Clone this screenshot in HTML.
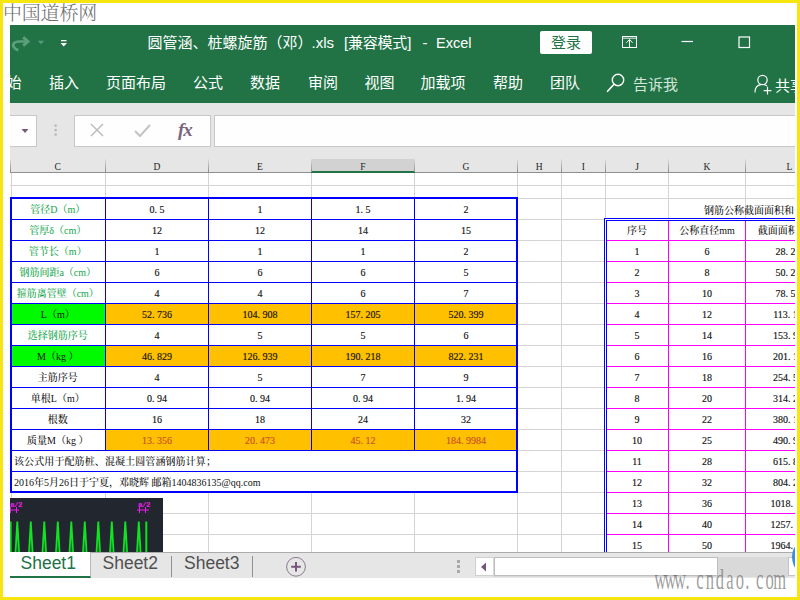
<!DOCTYPE html>
<html lang="zh-CN">
<head>
<meta charset="utf-8">
<title>圆管涵、桩螺旋筋（邓）.xls [兼容模式] - Excel</title>
<style>
html,body{margin:0;padding:0;}
body{width:800px;height:600px;position:relative;overflow:hidden;background:#fff;
 font-family:"Liberation Sans","Noto Sans CJK SC",sans-serif;}
#frame{position:absolute;left:0;top:0;width:794px;height:594px;border:3px solid #f6e50e;background:#fff;}
#app{position:absolute;left:10px;top:25px;width:785px;height:553px;overflow:hidden;background:#fff;}
.abs{position:absolute;}
#green{left:0;top:0;width:785px;height:78px;background:#217346;}
.tt{position:absolute;color:#fff;white-space:nowrap;}
.tab{position:absolute;top:47px;color:#fff;font-size:15px;line-height:22px;white-space:nowrap;}
#fbar{left:0;top:78px;width:785px;height:56px;background:#e6e6e6;}
.fbox{position:absolute;top:12px;height:32px;background:#fefefe;border:1px solid #c8c8c8;box-sizing:border-box;}
#hdr{left:0;top:134px;width:785px;height:13px;background:#e6e6e6;border-bottom:1px solid #8e8e8e;}
.ch{position:absolute;top:1.5px;height:13px;font:9.5px/13px "Liberation Serif","Noto Serif CJK SC",serif;color:#222;text-align:center;}
.vs{position:absolute;top:0;width:1px;height:13px;background:linear-gradient(#dcdcdc,#8c8c8c);}
#grid{left:0;top:148px;width:785px;height:379px;background:#fff;}
.gl{position:absolute;background:#d4d4d4;}
.cell{position:absolute;box-sizing:border-box;font:10px/21px "Liberation Serif","Noto Serif CJK SC",serif;color:#111;text-align:center;white-space:nowrap;overflow:hidden;letter-spacing:0;font-weight:500;}
.n{-webkit-text-stroke:0.15px currentColor;}
.p{display:inline-block;width:5px;text-align:left;}
.bl{position:absolute;background:#0000ff;}
.mg{position:absolute;background:#ff00ff;}
#tabs{left:0;top:527px;width:785px;height:26px;background:#e6e6e6;}
.st{position:absolute;top:-1.5px;font-size:17.5px;line-height:24px;color:#505050;white-space:nowrap;}
</style>
</head>
<body>
<div id="frame"></div>
<div class="abs" style="left:3px;top:1px;font:300 19px/26px 'Liberation Serif','Noto Serif CJK SC',serif;color:#6e6e6e;letter-spacing:-0.2px;white-space:nowrap;">中国道桥网</div>
<div id="app">

<div id="green" class="abs">
<svg class="abs" style="left:0;top:0" width="80" height="40" viewBox="0 0 80 40">
<path d="M8.3 25.2 C3.6 23.6 2 20.2 4.2 18 C5.6 16.7 7 16.5 9.5 16.5 L17.5 16.5" fill="none" stroke="#5c9f7c" stroke-width="2.7" stroke-linecap="butt"/>
<path d="M13.2 12.3 L18 16.5 L13.2 20.7" fill="none" stroke="#5c9f7c" stroke-width="2.9" stroke-linecap="butt" stroke-linejoin="miter"/>
<path d="M27.7 15.8 L34.2 15.8 L31 19.2 Z" fill="#55997a"/>
<rect x="51" y="15" width="5.5" height="1.3" fill="#fff"/>
<path d="M50.5 18 L57 18 L53.75 21.5 Z" fill="#fff"/>
</svg>
<div class="tt" style="left:137.6px;top:6.5px;font-size:15px;line-height:22px;">圆管涵、桩螺旋筋（邓）</div>
<div class="tt" style="left:301.5px;top:6.5px;font-size:15px;line-height:22px;">.xls</div>
<div class="tt" style="left:334px;top:6.5px;font-size:15px;line-height:22px;letter-spacing:-0.2px;">[兼容模式]</div>
<div class="tt" style="left:412.5px;top:6.5px;font-size:15px;line-height:22px;">-</div>
<div class="tt" style="left:426px;top:6.5px;font-size:14.5px;line-height:22px;">Excel</div>
<div class="abs" style="left:530px;top:6px;width:52px;height:23px;border-radius:2px;background:#fff;color:#217346;font-size:15px;line-height:24px;text-align:center;">登录</div>
<svg class="abs" style="left:605px;top:5px" width="150" height="24" viewBox="0 0 150 24">
<rect x="7.5" y="6.5" width="14" height="11" fill="none" stroke="#fff" stroke-width="1"/>
<path d="M7.5 8.2 H21.5" stroke="#fff" stroke-width="0.9" fill="none"/>
<path d="M14.5 17 V9.6 M11.4 12.8 L14.5 9.5 L17.6 12.8" stroke="#fff" stroke-width="1" fill="none"/>
<path d="M66.5 11.5 H78" stroke="#fff" stroke-width="1.2" fill="none"/>
<rect x="124" y="7" width="10.5" height="10.5" fill="none" stroke="#fff" stroke-width="1.2"/>
</svg>
<div class="tab" style="left:-3.5px;">始</div>
<div class="tab" style="left:39px;">插入</div>
<div class="tab" style="left:96px;">页面布局</div>
<div class="tab" style="left:183px;">公式</div>
<div class="tab" style="left:240px;">数据</div>
<div class="tab" style="left:298px;">审阅</div>
<div class="tab" style="left:354.5px;">视图</div>
<div class="tab" style="left:410.5px;">加载项</div>
<div class="tab" style="left:483px;">帮助</div>
<div class="tab" style="left:540px;">团队</div>
<div class="tab" style="left:623px;color:#d5e6dc;top:49px;">告诉我</div>
<div class="tab" style="left:765px;top:49.5px;">共享</div>
<svg class="abs" style="left:594px;top:44px" width="180" height="28" viewBox="0 0 180 28">
<circle cx="14" cy="11" r="5.7" fill="none" stroke="#fff" stroke-width="1.4"/>
<path d="M10 15.2 L3.6 22.3" stroke="#fff" stroke-width="1.6" fill="none" stroke-linecap="round"/>
<circle cx="158.5" cy="11" r="4.7" fill="none" stroke="#fff" stroke-width="1.2"/>
<path d="M151 23.5 C151 18 154 16 157 15.7 M160 15.7 C161 15.8 162 16.2 163 17" stroke="#fff" stroke-width="1.2" fill="none"/>
<path d="M163.5 17.8 V25.6 M159.6 21.7 H167.4" stroke="#fff" stroke-width="1.2" fill="none"/>
</svg>
</div>
<div id="fbar" class="abs">
<div class="fbox" style="left:-5px;width:32px;"></div>
<div class="fbox" style="left:64px;width:137px;"></div>
<div class="fbox" style="left:204px;width:600px;"></div>
<svg class="abs" style="left:0;top:12px" width="205" height="30" viewBox="0 0 205 30">
<path d="M11.5 14 L18.5 14 L15 18 Z" fill="#75577a"/>
<rect x="44.5" y="9.5" width="2.2" height="2.2" fill="#b5b5b5"/><rect x="44.5" y="14" width="2.2" height="2.2" fill="#b5b5b5"/><rect x="44.5" y="18.5" width="2.2" height="2.2" fill="#b5b5b5"/>
<path d="M81 9 L93 21 M93 9 L81 21" stroke="#bdbdbd" stroke-width="1.5" fill="none"/>
<path d="M125 16 L130 21 L140 10" stroke="#c4c4c4" stroke-width="2" fill="none"/>
<text x="168" y="21" font-family="Liberation Serif, serif" font-style="italic" font-size="19" fill="#7b6680" font-weight="bold" letter-spacing="-1">fx</text>
</svg>
</div>
<div id="hdr" class="abs">
<div class="abs" style="left:301.0px;top:0;width:103.5px;height:12px;background:#d2d2d2;border-bottom:2px solid #217346;"></div>
<div class="ch" style="left:0px;width:95.5px;">C</div>
<div class="ch" style="left:95.5px;width:103.0px;">D</div>
<div class="vs" style="left:95.0px;"></div>
<div class="ch" style="left:198.5px;width:103.0px;">E</div>
<div class="vs" style="left:198.0px;"></div>
<div class="ch" style="left:301.5px;width:103.0px;">F</div>
<div class="vs" style="left:301.0px;"></div>
<div class="ch" style="left:404.5px;width:103.0px;">G</div>
<div class="vs" style="left:404.0px;"></div>
<div class="ch" style="left:507.5px;width:43.5px;">H</div>
<div class="vs" style="left:507.0px;"></div>
<div class="ch" style="left:551px;width:44.5px;">I</div>
<div class="vs" style="left:550.5px;"></div>
<div class="ch" style="left:595.5px;width:63.0px;">J</div>
<div class="vs" style="left:595.0px;"></div>
<div class="ch" style="left:658.5px;width:77.0px;">K</div>
<div class="vs" style="left:658.0px;"></div>
<div class="ch" style="left:773.5px;width:12px;">L</div>
<div class="vs" style="left:735.0px;"></div>
<div class="vs" style="left:0px;"></div>
</div>
<div id="grid" class="abs">
<div class="gl" style="left:95.0px;top:0;width:1px;height:379px;"></div>
<div class="gl" style="left:198.0px;top:0;width:1px;height:379px;"></div>
<div class="gl" style="left:301.0px;top:0;width:1px;height:379px;"></div>
<div class="gl" style="left:404.0px;top:0;width:1px;height:379px;"></div>
<div class="gl" style="left:507.0px;top:0;width:1px;height:379px;"></div>
<div class="gl" style="left:550.5px;top:0;width:1px;height:379px;"></div>
<div class="gl" style="left:595.0px;top:0;width:1px;height:379px;"></div>
<div class="gl" style="left:658.0px;top:0;width:1px;height:379px;"></div>
<div class="gl" style="left:735.0px;top:0;width:1px;height:379px;"></div>
<div class="gl" style="left:1px;top:0;width:1px;height:379px;"></div>
<div class="gl" style="left:0;top:12.0px;width:785px;height:1px;"></div>
<div class="gl" style="left:0;top:25.0px;width:785px;height:1px;"></div>
<div class="gl" style="left:0;top:46.0px;width:785px;height:1px;"></div>
<div class="gl" style="left:0;top:67.0px;width:785px;height:1px;"></div>
<div class="gl" style="left:0;top:88.0px;width:785px;height:1px;"></div>
<div class="gl" style="left:0;top:109.0px;width:785px;height:1px;"></div>
<div class="gl" style="left:0;top:130.0px;width:785px;height:1px;"></div>
<div class="gl" style="left:0;top:151.0px;width:785px;height:1px;"></div>
<div class="gl" style="left:0;top:172.0px;width:785px;height:1px;"></div>
<div class="gl" style="left:0;top:193.0px;width:785px;height:1px;"></div>
<div class="gl" style="left:0;top:214.0px;width:785px;height:1px;"></div>
<div class="gl" style="left:0;top:235.0px;width:785px;height:1px;"></div>
<div class="gl" style="left:0;top:256.0px;width:785px;height:1px;"></div>
<div class="gl" style="left:0;top:277.0px;width:785px;height:1px;"></div>
<div class="gl" style="left:0;top:298.0px;width:785px;height:1px;"></div>
<div class="gl" style="left:0;top:319.0px;width:785px;height:1px;"></div>
<div class="gl" style="left:0;top:340.0px;width:785px;height:1px;"></div>
<div class="gl" style="left:0;top:361.0px;width:785px;height:1px;"></div>
<div class="gl" style="left:0;top:382.0px;width:785px;height:1px;"></div>
<div class="cell" style="left:0px;top:25.5px;width:95.5px;height:21.0px;color:#12a64a;">管径D（m）</div>
<div class="cell n" style="left:95.5px;top:25.5px;width:103.0px;height:21.0px;">0<span class="p">.</span>5</div>
<div class="cell n" style="left:198.5px;top:25.5px;width:103.0px;height:21.0px;">1</div>
<div class="cell n" style="left:301.5px;top:25.5px;width:103.0px;height:21.0px;">1<span class="p">.</span>5</div>
<div class="cell n" style="left:404.5px;top:25.5px;width:103.0px;height:21.0px;">2</div>
<div class="cell" style="left:0px;top:46.5px;width:95.5px;height:21.0px;color:#12a64a;">管厚δ（cm）</div>
<div class="cell n" style="left:95.5px;top:46.5px;width:103.0px;height:21.0px;">12</div>
<div class="cell n" style="left:198.5px;top:46.5px;width:103.0px;height:21.0px;">12</div>
<div class="cell n" style="left:301.5px;top:46.5px;width:103.0px;height:21.0px;">14</div>
<div class="cell n" style="left:404.5px;top:46.5px;width:103.0px;height:21.0px;">15</div>
<div class="cell" style="left:0px;top:67.5px;width:95.5px;height:21.0px;color:#12a64a;">管节长（m）</div>
<div class="cell n" style="left:95.5px;top:67.5px;width:103.0px;height:21.0px;">1</div>
<div class="cell n" style="left:198.5px;top:67.5px;width:103.0px;height:21.0px;">1</div>
<div class="cell n" style="left:301.5px;top:67.5px;width:103.0px;height:21.0px;">1</div>
<div class="cell n" style="left:404.5px;top:67.5px;width:103.0px;height:21.0px;">2</div>
<div class="cell" style="left:0px;top:88.5px;width:95.5px;height:21.0px;color:#12a64a;">钢筋间距a（cm）</div>
<div class="cell n" style="left:95.5px;top:88.5px;width:103.0px;height:21.0px;">6</div>
<div class="cell n" style="left:198.5px;top:88.5px;width:103.0px;height:21.0px;">6</div>
<div class="cell n" style="left:301.5px;top:88.5px;width:103.0px;height:21.0px;">6</div>
<div class="cell n" style="left:404.5px;top:88.5px;width:103.0px;height:21.0px;">5</div>
<div class="cell" style="left:0px;top:109.5px;width:95.5px;height:21.0px;color:#12a64a;">箍筋离管壁（cm）</div>
<div class="cell n" style="left:95.5px;top:109.5px;width:103.0px;height:21.0px;">4</div>
<div class="cell n" style="left:198.5px;top:109.5px;width:103.0px;height:21.0px;">4</div>
<div class="cell n" style="left:301.5px;top:109.5px;width:103.0px;height:21.0px;">6</div>
<div class="cell n" style="left:404.5px;top:109.5px;width:103.0px;height:21.0px;">7</div>
<div class="cell" style="left:0px;top:130.5px;width:95.5px;height:21.0px;background:#00fb00;color:#111;">L（m）</div>
<div class="cell n" style="left:95.5px;top:130.5px;width:103.0px;height:21.0px;background:#ffc000;">52<span class="p">.</span>736</div>
<div class="cell n" style="left:198.5px;top:130.5px;width:103.0px;height:21.0px;background:#ffc000;">104<span class="p">.</span>908</div>
<div class="cell n" style="left:301.5px;top:130.5px;width:103.0px;height:21.0px;background:#ffc000;">157<span class="p">.</span>205</div>
<div class="cell n" style="left:404.5px;top:130.5px;width:103.0px;height:21.0px;background:#ffc000;">520<span class="p">.</span>399</div>
<div class="cell" style="left:0px;top:151.5px;width:95.5px;height:21.0px;color:#12a64a;">选择钢筋序号</div>
<div class="cell n" style="left:95.5px;top:151.5px;width:103.0px;height:21.0px;">4</div>
<div class="cell n" style="left:198.5px;top:151.5px;width:103.0px;height:21.0px;">5</div>
<div class="cell n" style="left:301.5px;top:151.5px;width:103.0px;height:21.0px;">5</div>
<div class="cell n" style="left:404.5px;top:151.5px;width:103.0px;height:21.0px;">6</div>
<div class="cell" style="left:0px;top:172.5px;width:95.5px;height:21.0px;background:#00fb00;color:#111;">M（kg ）</div>
<div class="cell n" style="left:95.5px;top:172.5px;width:103.0px;height:21.0px;background:#ffc000;">46<span class="p">.</span>829</div>
<div class="cell n" style="left:198.5px;top:172.5px;width:103.0px;height:21.0px;background:#ffc000;">126<span class="p">.</span>939</div>
<div class="cell n" style="left:301.5px;top:172.5px;width:103.0px;height:21.0px;background:#ffc000;">190<span class="p">.</span>218</div>
<div class="cell n" style="left:404.5px;top:172.5px;width:103.0px;height:21.0px;background:#ffc000;">822<span class="p">.</span>231</div>
<div class="cell" style="left:0px;top:193.5px;width:95.5px;height:21.0px;">主筋序号</div>
<div class="cell n" style="left:95.5px;top:193.5px;width:103.0px;height:21.0px;">4</div>
<div class="cell n" style="left:198.5px;top:193.5px;width:103.0px;height:21.0px;">5</div>
<div class="cell n" style="left:301.5px;top:193.5px;width:103.0px;height:21.0px;">7</div>
<div class="cell n" style="left:404.5px;top:193.5px;width:103.0px;height:21.0px;">9</div>
<div class="cell" style="left:0px;top:214.5px;width:95.5px;height:21.0px;">单根L（m）</div>
<div class="cell n" style="left:95.5px;top:214.5px;width:103.0px;height:21.0px;">0<span class="p">.</span>94</div>
<div class="cell n" style="left:198.5px;top:214.5px;width:103.0px;height:21.0px;">0<span class="p">.</span>94</div>
<div class="cell n" style="left:301.5px;top:214.5px;width:103.0px;height:21.0px;">0<span class="p">.</span>94</div>
<div class="cell n" style="left:404.5px;top:214.5px;width:103.0px;height:21.0px;">1<span class="p">.</span>94</div>
<div class="cell" style="left:0px;top:235.5px;width:95.5px;height:21.0px;">根数</div>
<div class="cell n" style="left:95.5px;top:235.5px;width:103.0px;height:21.0px;">16</div>
<div class="cell n" style="left:198.5px;top:235.5px;width:103.0px;height:21.0px;">18</div>
<div class="cell n" style="left:301.5px;top:235.5px;width:103.0px;height:21.0px;">24</div>
<div class="cell n" style="left:404.5px;top:235.5px;width:103.0px;height:21.0px;">32</div>
<div class="cell" style="left:0px;top:256.5px;width:95.5px;height:21.0px;">质量M（kg ）</div>
<div class="cell n" style="left:95.5px;top:256.5px;width:103.0px;height:21.0px;background:#ffc000;color:#c9502c;">13<span class="p">.</span>356</div>
<div class="cell n" style="left:198.5px;top:256.5px;width:103.0px;height:21.0px;background:#ffc000;color:#c9502c;">20<span class="p">.</span>473</div>
<div class="cell n" style="left:301.5px;top:256.5px;width:103.0px;height:21.0px;background:#ffc000;color:#c9502c;">45<span class="p">.</span>12</div>
<div class="cell n" style="left:404.5px;top:256.5px;width:103.0px;height:21.0px;background:#ffc000;color:#c9502c;">184<span class="p">.</span>9984</div>
<div class="cell" style="left:0;top:277.5px;width:507px;height:21px;background:#fff;text-align:left;padding-left:4px;letter-spacing:0.1px;">该公式用于配筋桩、混凝土圆管涵钢筋计算；</div>
<div class="cell" style="left:0;top:298.5px;width:507px;height:21px;background:#fff;text-align:left;padding-left:4px;letter-spacing:0;">2016年5月26日于宁夏，邓晓辉 邮箱1404836135@qq.com</div>
<div class="bl" style="left:0;top:24.0px;width:508px;height:2px;"></div>
<div class="bl" style="left:0;top:46.0px;width:508px;height:1px;"></div>
<div class="bl" style="left:0;top:67.0px;width:508px;height:1px;"></div>
<div class="bl" style="left:0;top:88.0px;width:508px;height:1px;"></div>
<div class="bl" style="left:0;top:109.0px;width:508px;height:1px;"></div>
<div class="bl" style="left:0;top:130.0px;width:508px;height:1px;"></div>
<div class="bl" style="left:0;top:151.0px;width:508px;height:1px;"></div>
<div class="bl" style="left:0;top:172.0px;width:508px;height:1px;"></div>
<div class="bl" style="left:0;top:193.0px;width:508px;height:1px;"></div>
<div class="bl" style="left:0;top:214.0px;width:508px;height:1px;"></div>
<div class="bl" style="left:0;top:235.0px;width:508px;height:1px;"></div>
<div class="bl" style="left:0;top:256.0px;width:508px;height:1px;"></div>
<div class="bl" style="left:0;top:277.0px;width:508px;height:1px;"></div>
<div class="bl" style="left:0;top:298.0px;width:508px;height:1px;"></div>
<div class="bl" style="left:0;top:318.0px;width:508px;height:2px;"></div>
<div class="bl" style="left:0px;top:24.0px;width:2px;height:296.0px;"></div>
<div class="bl" style="left:95.0px;top:25.5px;width:1px;height:252.0px;"></div>
<div class="bl" style="left:198.0px;top:25.5px;width:1px;height:252.0px;"></div>
<div class="bl" style="left:301.0px;top:25.5px;width:1px;height:252.0px;"></div>
<div class="bl" style="left:404.0px;top:25.5px;width:1px;height:252.0px;"></div>
<div class="bl" style="left:506px;top:24.0px;width:2px;height:296.0px;"></div>
<div class="cell" style="left:694px;top:26.5px;width:120px;height:21px;text-align:left;">钢筋公称截面面积和专</div>
<div class="abs" style="left:595px;top:46px;width:200px;height:340px;background:#fff;"></div>
<div class="cell" style="left:595.5px;top:46.5px;width:63.0px;height:21px;">序号</div>
<div class="cell" style="left:658.5px;top:46.5px;width:77.0px;height:21px;">公称直径mm</div>
<div class="cell" style="left:736px;top:46.5px;width:84px;height:21px;">截面面积mm2</div>
<div class="cell n" style="left:595.5px;top:67.5px;width:63.0px;height:21px;">1</div>
<div class="cell n" style="left:658.5px;top:67.5px;width:77.0px;height:21px;">6</div>
<div class="cell n" style="left:736px;top:67.5px;width:84px;height:21px;">28<span class="p">.</span>27</div>
<div class="cell n" style="left:595.5px;top:88.5px;width:63.0px;height:21px;">2</div>
<div class="cell n" style="left:658.5px;top:88.5px;width:77.0px;height:21px;">8</div>
<div class="cell n" style="left:736px;top:88.5px;width:84px;height:21px;">50<span class="p">.</span>27</div>
<div class="cell n" style="left:595.5px;top:109.5px;width:63.0px;height:21px;">3</div>
<div class="cell n" style="left:658.5px;top:109.5px;width:77.0px;height:21px;">10</div>
<div class="cell n" style="left:736px;top:109.5px;width:84px;height:21px;">78<span class="p">.</span>54</div>
<div class="cell n" style="left:595.5px;top:130.5px;width:63.0px;height:21px;">4</div>
<div class="cell n" style="left:658.5px;top:130.5px;width:77.0px;height:21px;">12</div>
<div class="cell n" style="left:736px;top:130.5px;width:84px;height:21px;">113<span class="p">.</span>10</div>
<div class="cell n" style="left:595.5px;top:151.5px;width:63.0px;height:21px;">5</div>
<div class="cell n" style="left:658.5px;top:151.5px;width:77.0px;height:21px;">14</div>
<div class="cell n" style="left:736px;top:151.5px;width:84px;height:21px;">153<span class="p">.</span>90</div>
<div class="cell n" style="left:595.5px;top:172.5px;width:63.0px;height:21px;">6</div>
<div class="cell n" style="left:658.5px;top:172.5px;width:77.0px;height:21px;">16</div>
<div class="cell n" style="left:736px;top:172.5px;width:84px;height:21px;">201<span class="p">.</span>10</div>
<div class="cell n" style="left:595.5px;top:193.5px;width:63.0px;height:21px;">7</div>
<div class="cell n" style="left:658.5px;top:193.5px;width:77.0px;height:21px;">18</div>
<div class="cell n" style="left:736px;top:193.5px;width:84px;height:21px;">254<span class="p">.</span>50</div>
<div class="cell n" style="left:595.5px;top:214.5px;width:63.0px;height:21px;">8</div>
<div class="cell n" style="left:658.5px;top:214.5px;width:77.0px;height:21px;">20</div>
<div class="cell n" style="left:736px;top:214.5px;width:84px;height:21px;">314<span class="p">.</span>20</div>
<div class="cell n" style="left:595.5px;top:235.5px;width:63.0px;height:21px;">9</div>
<div class="cell n" style="left:658.5px;top:235.5px;width:77.0px;height:21px;">22</div>
<div class="cell n" style="left:736px;top:235.5px;width:84px;height:21px;">380<span class="p">.</span>10</div>
<div class="cell n" style="left:595.5px;top:256.5px;width:63.0px;height:21px;">10</div>
<div class="cell n" style="left:658.5px;top:256.5px;width:77.0px;height:21px;">25</div>
<div class="cell n" style="left:736px;top:256.5px;width:84px;height:21px;">490<span class="p">.</span>90</div>
<div class="cell n" style="left:595.5px;top:277.5px;width:63.0px;height:21px;">11</div>
<div class="cell n" style="left:658.5px;top:277.5px;width:77.0px;height:21px;">28</div>
<div class="cell n" style="left:736px;top:277.5px;width:84px;height:21px;">615<span class="p">.</span>80</div>
<div class="cell n" style="left:595.5px;top:298.5px;width:63.0px;height:21px;">12</div>
<div class="cell n" style="left:658.5px;top:298.5px;width:77.0px;height:21px;">32</div>
<div class="cell n" style="left:736px;top:298.5px;width:84px;height:21px;">804<span class="p">.</span>20</div>
<div class="cell n" style="left:595.5px;top:319.5px;width:63.0px;height:21px;">13</div>
<div class="cell n" style="left:658.5px;top:319.5px;width:77.0px;height:21px;">36</div>
<div class="cell n" style="left:736px;top:319.5px;width:84px;height:21px;">1018<span class="p">.</span>00</div>
<div class="cell n" style="left:595.5px;top:340.5px;width:63.0px;height:21px;">14</div>
<div class="cell n" style="left:658.5px;top:340.5px;width:77.0px;height:21px;">40</div>
<div class="cell n" style="left:736px;top:340.5px;width:84px;height:21px;">1257<span class="p">.</span>00</div>
<div class="cell n" style="left:595.5px;top:361.5px;width:63.0px;height:21px;">15</div>
<div class="cell n" style="left:658.5px;top:361.5px;width:77.0px;height:21px;">50</div>
<div class="cell n" style="left:736px;top:361.5px;width:84px;height:21px;">1964<span class="p">.</span>00</div>
<div class="mg" style="left:597px;top:67.0px;width:190px;height:1px;"></div>
<div class="mg" style="left:597px;top:88.0px;width:190px;height:1px;"></div>
<div class="mg" style="left:597px;top:109.0px;width:190px;height:1px;"></div>
<div class="mg" style="left:597px;top:130.0px;width:190px;height:1px;"></div>
<div class="mg" style="left:597px;top:151.0px;width:190px;height:1px;"></div>
<div class="mg" style="left:597px;top:172.0px;width:190px;height:1px;"></div>
<div class="mg" style="left:597px;top:193.0px;width:190px;height:1px;"></div>
<div class="mg" style="left:597px;top:214.0px;width:190px;height:1px;"></div>
<div class="mg" style="left:597px;top:235.0px;width:190px;height:1px;"></div>
<div class="mg" style="left:597px;top:256.0px;width:190px;height:1px;"></div>
<div class="mg" style="left:597px;top:277.0px;width:190px;height:1px;"></div>
<div class="mg" style="left:597px;top:298.0px;width:190px;height:1px;"></div>
<div class="mg" style="left:597px;top:319.0px;width:190px;height:1px;"></div>
<div class="mg" style="left:597px;top:340.0px;width:190px;height:1px;"></div>
<div class="mg" style="left:597px;top:361.0px;width:190px;height:1px;"></div>
<div class="mg" style="left:658.0px;top:48px;width:1px;height:340px;"></div>
<div class="mg" style="left:735.0px;top:48px;width:1px;height:340px;"></div>
<div class="bl" style="left:594px;top:45px;width:192px;height:1px;"></div>
<div class="bl" style="left:596px;top:47px;width:190px;height:1px;"></div>
<div class="bl" style="left:594px;top:45px;width:1px;height:340px;"></div>
<div class="bl" style="left:596px;top:47px;width:1px;height:340px;"></div>
<svg class="abs" style="left:0;top:325px" width="153" height="55" viewBox="0 0 153 55">
<rect x="0" y="0" width="153" height="55" fill="#22272f"/>
<path d="M4.6 55 L6.4 23.5 L8.2 23.5 L10.0 55 Z" fill="#0fe322"/>
<path d="M6.15 55 L7.3 40 L8.45 55 Z" fill="#146a2a"/>
<path d="M18.1 55 L19.9 23.5 L21.7 23.5 L23.5 55 Z" fill="#0fe322"/>
<path d="M19.65 55 L20.8 40 L21.95 55 Z" fill="#146a2a"/>
<path d="M31.6 55 L33.4 23.5 L35.2 23.5 L37.0 55 Z" fill="#0fe322"/>
<path d="M33.15 55 L34.3 40 L35.45 55 Z" fill="#146a2a"/>
<path d="M45.1 55 L46.9 23.5 L48.7 23.5 L50.5 55 Z" fill="#0fe322"/>
<path d="M46.65 55 L47.8 40 L48.95 55 Z" fill="#146a2a"/>
<path d="M58.6 55 L60.4 23.5 L62.2 23.5 L64.0 55 Z" fill="#0fe322"/>
<path d="M60.15 55 L61.3 40 L62.45 55 Z" fill="#146a2a"/>
<path d="M72.1 55 L73.9 23.5 L75.7 23.5 L77.5 55 Z" fill="#0fe322"/>
<path d="M73.65 55 L74.8 40 L75.95 55 Z" fill="#146a2a"/>
<path d="M85.6 55 L87.4 23.5 L89.2 23.5 L91.0 55 Z" fill="#0fe322"/>
<path d="M87.15 55 L88.3 40 L89.45 55 Z" fill="#146a2a"/>
<path d="M99.1 55 L100.9 23.5 L102.7 23.5 L104.5 55 Z" fill="#0fe322"/>
<path d="M100.65 55 L101.8 40 L102.95 55 Z" fill="#146a2a"/>
<path d="M112.6 55 L114.4 23.5 L116.2 23.5 L118.0 55 Z" fill="#0fe322"/>
<path d="M114.15 55 L115.3 40 L116.45 55 Z" fill="#146a2a"/>
<path d="M126.1 55 L127.9 23.5 L129.7 23.5 L131.5 55 Z" fill="#0fe322"/>
<path d="M127.65 55 L128.8 40 L129.95 55 Z" fill="#146a2a"/>
<rect x="0" y="23.5" width="1.6" height="32" fill="#08e61a"/>
<rect x="135.3" y="23.5" width="2" height="32" fill="#08e61a"/>
<text x="0" y="8.5" font-family="Liberation Mono, monospace" font-size="7.5" font-weight="bold" fill="#f21af2" letter-spacing="-0.5">a/2</text>
<text x="128" y="8.5" font-family="Liberation Mono, monospace" font-size="7.5" font-weight="bold" fill="#f21af2" letter-spacing="-0.5">a/2</text>
<path d="M0.5 9 V15 M6.5 9 V15 M0 12 H9" stroke="#f21af2" stroke-width="1" fill="none"/>
<path d="M129.5 9 V15 M135.5 9 V15 M127 12 H139" stroke="#f21af2" stroke-width="1" fill="none"/>
</svg>
</div>
<div id="tabs" class="abs">
<div class="abs" style="left:80px;top:0;width:705px;height:1px;background:#ababab;"></div>
<div class="abs" style="left:0;top:0;width:80px;height:24px;background:#fff;border-bottom:2px solid #217346;border-right:1px solid #b8b8b8;"></div>
<div class="st" style="left:10.5px;color:#217346;">Sheet1</div>
<div class="st" style="left:92.5px;">Sheet2</div>
<div class="st" style="left:174px;">Sheet3</div>
<div class="abs" style="left:161px;top:4px;width:1px;height:21px;background:#8f8f8f;"></div>
<div class="abs" style="left:242px;top:4px;width:1px;height:21px;background:#8f8f8f;"></div>
<svg class="abs" style="left:274px;top:2px" width="26" height="24" viewBox="0 0 26 24">
<circle cx="12" cy="12.8" r="9.4" fill="none" stroke="#8a7790" stroke-width="1"/>
<path d="M12 8 V17.6 M7.2 12.8 H16.8" stroke="#75577a" stroke-width="2" fill="none"/></svg>
<div class="abs" style="left:447px;top:8px;width:3px;height:3px;background:#a9a9a9;box-shadow:0 5px 0 #a9a9a9,0 10px 0 #a9a9a9;"></div>
<div class="abs" style="left:465px;top:5px;width:19px;height:19px;background:#fff;border:1px solid #cfcfcf;box-sizing:border-box;"></div>
<svg class="abs" style="left:465px;top:5.5px" width="18" height="18" viewBox="0 0 18 18"><path d="M11 4.5 L6 9 L11 13.5 Z" fill="#75577a"/></svg>
<div class="abs" style="left:483px;top:4.5px;width:295px;height:20px;background:#d9d9d9;"></div>
<div class="abs" style="left:483.5px;top:5px;width:224.5px;height:19px;background:#fff;border:1px solid #bdbdbd;box-sizing:border-box;"></div>
<div class="abs" style="left:778px;top:5px;width:10px;height:19px;background:#fff;border:1px solid #c4c4c4;box-sizing:border-box;"></div>
</div>
<div class="abs" style="left:782px;top:511.5px;width:40px;height:40px;border-radius:50%;background:#3a8fe2;"></div>
</div>
<svg class="abs" style="left:655px;top:560px" width="140" height="36" viewBox="0 0 140 36"><text transform="scale(0.58,1)" x="8.97 26.12 43.28 56.12 77.59 94.74 111.90 129.05 146.21 159.05 180.52 197.67 214.83" y="29.3" text-anchor="middle" font-family="Liberation Serif, serif" font-size="28.5" fill="#6a6a6a" fill-opacity="0.66">www.cndao.com</text></svg>
</body>
</html>
